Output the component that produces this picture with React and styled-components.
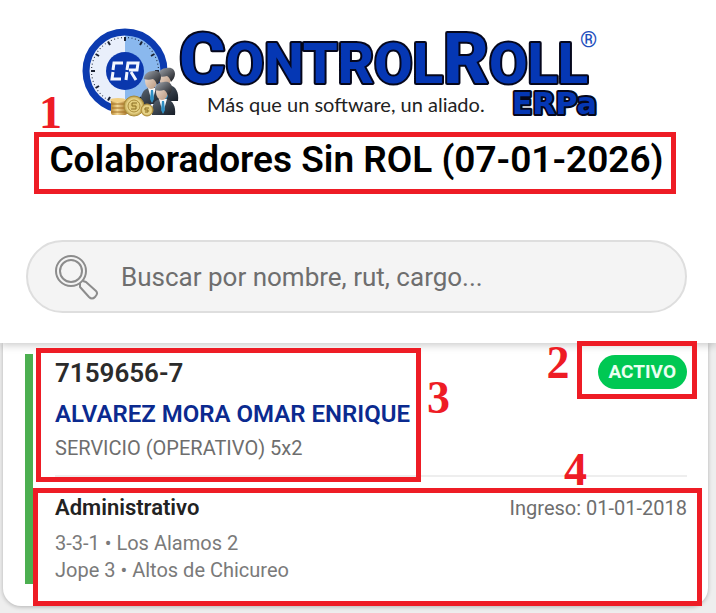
import React, { useState } from 'react';
import styled, { createGlobalStyle } from 'styled-components';

const GlobalStyle = createGlobalStyle`
  * {
    box-sizing: border-box;
  }

  body {
    margin: 0;
    background-color: #eeeeee;
    font-family: Roboto, "Liberation Sans", sans-serif;
  }
`;

const Page = styled.main`
  padding-bottom: 7px;
`;

const Header = styled.header`
  position: relative;
  z-index: 1;
  display: flex;
  flex-direction: column;
  padding: 24px 29px 30px 26px;
  background-color: white;
  box-shadow: 0 2px 8px rgba(0, 0, 0, 0.22);
`;

const Logo = styled.svg`
  display: block;
  width: 100%;
  max-width: 552px;
  margin: 0 auto;
  overflow: visible;
`;

const Wordmark = styled.text`
  font-family: Roboto, sans-serif;
  font-weight: 800;
  font-size: 56px;
  fill: #0537b4;
  stroke: #05071c;
  stroke-width: 4px;
  stroke-linejoin: round;
  paint-order: stroke;
`;

const BigCap = styled.tspan`
  font-size: 71px;
`;

const Suffix = styled(Wordmark)`
  font-family: "DejaVu Sans", sans-serif;
  font-size: 30px;
`;

const Tagline = styled.text`
  font-family: Lato, sans-serif;
  font-size: 20px;
  fill: #222;
`;

const Registered = styled.text`
  font-family: Roboto, sans-serif;
  font-weight: 700;
  font-size: 22px;
  fill: #1f4fbd;
`;

const TitleArea = styled.div`
  position: relative;
  margin-top: 20px;
`;

const Title = styled.h1`
  margin: 0;
  color: black;
  font-size: 37px;
  font-weight: 600;
  line-height: 44px;
  text-align: center;
`;

const SearchBox = styled.label`
  display: flex;
  align-items: center;
  gap: 21px;
  height: 73px;
  margin-top: 58px;
  padding: 0 26px;
  background-color: #f4f4f4;
  border: 2px solid #dedede;
  border-radius: 37px;
`;

const SearchInput = styled.input`
  flex: 1;
  min-width: 0;
  padding: 0;
  background: transparent;
  border: none;
  outline: none;
  color: #333;
  font-family: inherit;
  font-size: 26px;

  &::placeholder {
    color: #6e6e6e;
    opacity: 1;
  }
`;

const Card = styled.article`
  margin: 0 8px 0 3px;
  padding: 11px 21px 22px 22px;
  background-color: white;
  border-radius: 0 0 18px 18px;
  box-shadow: 0 1px 4px rgba(0, 0, 0, 0.25);
`;

const CardBody = styled.div`
  padding-left: 22px;
  border-left: 8px solid #4caf50;
`;

const Row = styled.div`
  display: flex;
  justify-content: space-between;
  align-items: flex-start;
`;

const Summary = styled.section`
  position: relative;
  padding-bottom: 15px;
  border-bottom: 2px solid #eeeeee;
`;

const Rut = styled.p`
  margin: 0;
  color: #2b2b2b;
  font-size: 26px;
  font-weight: 600;
  line-height: 38px;
`;

const Name = styled.h2`
  margin: 8px 0;
  color: #0b2a8f;
  font-size: 24px;
  font-weight: 600;
  line-height: 28px;
`;

const Service = styled.p`
  margin: 0;
  color: #6e6e6e;
  font-size: 20px;
  line-height: 24px;
`;

const BadgeArea = styled.div`
  position: relative;
  padding-top: 1px;
`;

const Badge = styled.span`
  display: block;
  padding: 0 11px;
  background-color: #00c853;
  border-radius: 17px;
  color: #eafff1;
  font-size: 19px;
  font-weight: 700;
  line-height: 34px;
`;

const Details = styled.section`
  position: relative;
  padding-top: 18px;
`;

const Role = styled.h3`
  margin: 0;
  color: #222;
  font-size: 22px;
  font-weight: 600;
  line-height: 26px;
`;

const HireDate = styled.p`
  margin: 0;
  color: #6e6e6e;
  font-size: 20px;
  line-height: 26px;
`;

const Places = styled.p`
  margin: 9px 0 0;
  color: #7a7a7a;
  font-size: 20px;
  line-height: 27px;
`;

const Callout = styled.div`
  position: absolute;
  inset: ${(props) => props.$inset};
  z-index: 2;
  border: 5px solid #ee1c25;
  pointer-events: none;
`;

const CalloutNumber = styled.span`
  position: absolute;
  inset: ${(props) => props.$inset};
  color: #ee1c25;
  font-family: "Liberation Serif", serif;
  font-size: 46px;
  font-weight: 700;
  line-height: 46px;
`;

const ticks = Array.from({ length: 60 }, (_, i) => i);

const Person = ({ x, y }) => (
    <g transform={`translate(${x} ${y})`}>
        <path d="M-11 31c-1-9 2-14 7-16h8c6 2 9 7 8 16z" fill="url(#suit)" />
        <path d="M-4 15l4 14 4-14z" fill="#f4f7fa" />
        <path d="M-1 17h2l1 9-2 4-2-4z" fill="#2f8fc4" />
        <ellipse cx="-1" cy="8" rx="6" ry="8" fill="url(#skin)" />
        <path d="M-8 6c0-5 4-8 9-8 5-1 8 2 8 6 0 3-2 6-4 8-1-3-2-5-4-6-3 1-6 1-9 0z" fill="url(#hair)" />
    </g>
);

const BrandLogo = () => (
    <Logo viewBox="0 0 552 94" role="img" aria-label="ControlRoll ERPa">
        <defs>
            <linearGradient id="suit" x1="0" y1="0" x2="1" y2="1">
                <stop offset="0" stopColor="#5b6672" />
                <stop offset="1" stopColor="#151c26" />
            </linearGradient>
            <linearGradient id="hair" x1="0" y1="0" x2="1" y2="1">
                <stop offset="0" stopColor="#a3a8af" />
                <stop offset="1" stopColor="#16181d" />
            </linearGradient>
            <linearGradient id="skin" x1="0" y1="0" x2="1" y2="1">
                <stop offset="0" stopColor="#f4e6da" />
                <stop offset="1" stopColor="#b9967d" />
            </linearGradient>
            <linearGradient id="gold" x1="0" y1="0" x2="1" y2="0">
                <stop offset="0" stopColor="#b98a35" />
                <stop offset="0.4" stopColor="#f3d896" />
                <stop offset="1" stopColor="#a9782b" />
            </linearGradient>
            <radialGradient id="coin">
                <stop offset="0" stopColor="#d8bd62" />
                <stop offset="0.7" stopColor="#e9d68c" />
                <stop offset="1" stopColor="#b89a44" />
            </radialGradient>
        </defs>

        {/* clock */}
        <circle cx="44" cy="47" r="39" fill="#e9effb" />
        <path d="M44 8a39 39 0 0 1 0 78z" fill="#8ab8ee" />
        <circle cx="44" cy="47" r="39" fill="none" stroke="#0c3bb0" strokeWidth="7" />
        {ticks.map((i) => (
            <line
                key={i}
                x1="44"
                x2="44"
                y1="13"
                y2={i % 5 === 0 ? 17 : 14}
                stroke="#1b2233"
                strokeWidth={i % 5 === 0 ? 2 : 1}
                transform={`rotate(${i * 6} 44 47)`}
            />
        ))}
        <circle cx="44" cy="47" r="19" fill="#0a37ad" />
        <g fill="none" stroke="#f2f6ff" strokeWidth="3">
            <path d="M42 39h-9l-1 7M32 48l-1 7h9" />
            <path d="M45 56l1-8M46 46l1-7h10l-1 7h-8M50 48l5 8" />
        </g>

        {/* people and coins */}
        <Person x={85} y={46} />
        <Person x={71} y={49} />
        <Person x={82} y={60} />
        <rect x="30" y="76" width="16" height="15" rx="2" fill="url(#gold)" />
        <path d="M30 80h16M31 84h15M30 88h16" stroke="#a36f22" strokeWidth="1" />
        <ellipse cx="37" cy="76" rx="8" ry="2" fill="#f1cf83" />
        <circle cx="53" cy="82" r="10" fill="url(#coin)" stroke="#a98b38" />
        <circle cx="53" cy="82" r="6" fill="none" stroke="#a98b38" />
        <path d="M56 79h-5v3h4v3h-5" fill="none" stroke="#8a6e25" strokeWidth="1" />
        <circle cx="66" cy="86" r="6" fill="url(#coin)" stroke="#b08e3b" />
        <path d="M68 84h-4v2h3v2h-3" fill="none" stroke="#8a6e25" strokeWidth="1" />

        <Wordmark x="98" y="59">
            <BigCap>C</BigCap>ONTROL<BigCap>R</BigCap>OLL
        </Wordmark>
        <Registered x="499" y="23">®</Registered>
        <Tagline x="126" y="88">Más que un software, un aliado.</Tagline>
        <Suffix x="431" y="90">ERPa</Suffix>
    </Logo>
);

const SearchIcon = () => (
    <svg width="46" height="46" viewBox="0 0 46 46" fill="none" stroke="#8c8c8c" strokeWidth="2" aria-hidden="true">
        <circle cx="17" cy="17" r="15" />
        <circle cx="17" cy="17" r="11" />
        <path d="M29 27l3 1 10 9c2 2 1 4-1 6s-4 2-6 0L26 33l0-4" strokeLinejoin="round" />
    </svg>
);

const App = () => {
    const [query, setQuery] = useState('');

    return (
        <Page>
            <GlobalStyle />
            <Header>
                <BrandLogo />
                <TitleArea>
                    <Title>Colaboradores Sin ROL (07-01-2026)</Title>
                    <Callout $inset="-6px 11px -12px 8px">
                        <CalloutNumber $inset="-47px auto auto 0">1</CalloutNumber>
                    </Callout>
                </TitleArea>
                <SearchBox>
                    <SearchIcon />
                    <SearchInput
                        type="text"
                        name="query"
                        aria-label="Buscar"
                        placeholder="Buscar por nombre, rut, cargo..."
                        value={query}
                        onChange={(e) => setQuery(e.target.value)}
                    />
                </SearchBox>
            </Header>

            <Card>
                <CardBody>
                    <Summary>
                        <Row>
                            <Rut>7159656-7</Rut>
                            <BadgeArea>
                                <Badge>ACTIVO</Badge>
                                <Callout $inset="-13px -10px -10px -21px">
                                    <CalloutNumber $inset="-6px auto auto -35px">2</CalloutNumber>
                                </Callout>
                            </BadgeArea>
                        </Row>
                        <Name>ALVAREZ MORA OMAR ENRIQUE</Name>
                        <Service>SERVICIO (OPERATIVO) 5x2</Service>
                        <Callout $inset="-6px 266px -7px -19px">
                            <CalloutNumber $inset="22px -34px auto auto">3</CalloutNumber>
                        </Callout>
                    </Summary>
                    <Details>
                        <Row>
                            <Role>Administrativo</Role>
                            <HireDate>Ingreso: 01-01-2018</HireDate>
                        </Row>
                        <Places>
                            3-3-1 • Los Alamos 2<br />
                            Jope 3 • Altos de Chicureo
                        </Places>
                        <Callout $inset="11px -15px -22px -22px">
                            <CalloutNumber $inset="-46px 110px auto auto">4</CalloutNumber>
                        </Callout>
                    </Details>
                </CardBody>
            </Card>
        </Page>
    );
};

export default App;
